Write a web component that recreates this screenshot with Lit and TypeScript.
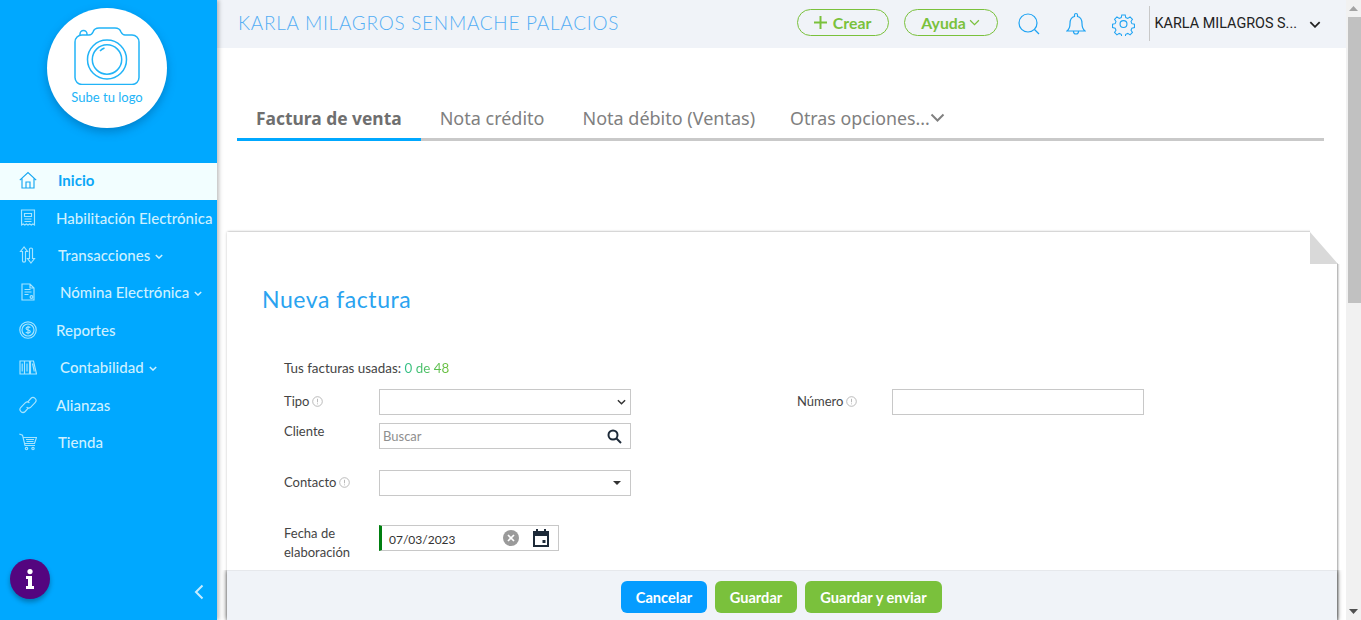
import { LitElement, html, css, svg } from "lit";
import { customElement } from "lit/decorators.js";

const nav = [
  { label: "Inicio", icon: "home", cls: "t58 active" },
  { label: "Habilitación Electrónica", icon: "receipt", cls: "t56" },
  { label: "Transacciones", icon: "swap", cls: "t58", caret: true },
  { label: "Nómina Electrónica", icon: "doc", cls: "t60", caret: true },
  { label: "Reportes", icon: "coin", cls: "t56" },
  { label: "Contabilidad", icon: "books", cls: "t60", caret: true },
  { label: "Alianzas", icon: "link", cls: "t56" },
  { label: "Tienda", icon: "cart", cls: "t58" },
];

const icons: Record<string, unknown> = {
  home: svg`<path d="M.8 9.200 9 1.500l8.200 7.700M3 7.500V17h12V7.500M7 17v-6h4v6"/>`,
  receipt: svg`<path d="M2.500 1h13v15l-1.600-1-1.600 1-1.600-1-1.700 1-1.600-1-1.600 1-1.600-1-1.600 1zM5.500 4.500h7v3h-7zM5.500 10h7M5.500 12.500h7"/>`,
  swap: svg`<path d="M5 1 1.500 5.500H3.500V15c0 1.400 3 1.400 3 0V5.500h2zM12 17l3.500-4.500h-2V3c0-1.400-3-1.400-3 0v9.500h-2z"/>`,
  doc: svg`<path d="M3 1h8l4 4v12H3zM11 1v4h4M5.500 6.500h6M5.500 9h7M5.500 11.500h4"/><circle cx="12.500" cy="14" r="1.400"/>`,
  coin: svg`<circle cx="9" cy="9" r="8.200"/><circle cx="9" cy="9" r="6"/><path d="M11.200 6.700c-.6-1-4-1.200-4.100.7 0 2.100 4.200 1 4.200 3.200 0 1.800-3.700 1.700-4.500.5M9 4.800v8.400"/>`,
  books: svg`<path d="M1 3h4.500v13H1zM5.500 3h5v13h-5zM11.500 3h3l3 13h-6zM3.200 5.500v8M8 5.500v8M13.500 5.500l1.800 8"/>`,
  link: svg`<path d="M8.600 6.200 11.800 2.500a3 3 0 0 1 4.300 4.200L11.800 11.200a3 3 0 0 1-4.200 0"/><path d="M9.400 11.800 6.200 15.500A3 3 0 0 1 1.900 11.300L6.200 6.800a3 3 0 0 1 4.200 0"/>`,
  cart: svg`<path d="M.300 1 3.500 2.200 6 12.500h10M4 4.500h13.500l-2 6H5.500M7 6.500h8M7.500 8.500h7"/><circle cx="7.500" cy="15.500" r="1.200"/><circle cx="14" cy="15.500" r="1.200"/>`,
};

const chevron = (w: number, sw = 1.6) =>
  html`<svg class="chev" width=${w} height=${Math.round(w * 0.62)} viewBox="0 0 10 6" fill="none" stroke="currentColor" stroke-width=${sw}><path d="M1 1l4 4 4-4"/></svg>`;

const info = html`<svg class="inf" width="11" height="11" viewBox="0 0 11 11" fill="none" stroke="#a9a9a9" stroke-width=".8"><circle cx="5.500" cy="5.500" r="4.800"/><path d="M5.500 2.800v3.500M5.500 7.400v.9"/></svg>`;

@customElement("app-root")
export class AppRoot extends LitElement {
  static styles = css`
    :host { display: block; height: 620px; overflow: hidden; font-family: "Lato", "Noto Sans", sans-serif; background: #fff; }
    .page { display: flex; height: 620px; position: relative; overflow: hidden; }

    .side { width: 217px; flex: none; background: #00a8ff; display: flex; flex-direction: column; position: relative; z-index: 3; box-shadow: 2px 0 4px rgba(0,0,0,.25); }
    .logo-wrap { height: 163px; flex: none; display: flex; justify-content: center; padding: 8px 3px 0 0; box-sizing: border-box; }
    .logo { width: 120px; height: 120px; border-radius: 50%; background: #fff; box-shadow: 0 4px 10px rgba(0,60,110,.35); display: flex; flex-direction: column; align-items: center; padding-top: 19px; box-sizing: border-box; color: #22b4f7; font-size: 13px; }
    .logo span { margin-top: 4px; }
    .nav { display: flex; flex-direction: column; }
    .item { height: 37.4px; display: flex; align-items: center; padding-left: 19px; color: #cdf0ff; font-size: 15px; letter-spacing: .03px; font-weight: 500; white-space: nowrap; }
    .item svg.ic { width: 18px; height: 18px; margin-bottom: 3px; flex: none; fill: none; stroke: #a6e4ff; stroke-width: 1.150; }
    .item .lbl { padding-bottom: 3px; }
    .item.active { background: #f2feff; color: #0ba7f7; font-weight: 700; }
    .item.active svg.ic { stroke: #16a7f2; }
    .t56 .lbl { margin-left: 19px; }
    .t58 .lbl { margin-left: 21px; }
    .t60 .lbl { margin-left: 23px; }
    .item .chev { margin-left: 5px; }
    .side-foot { margin-top: auto; display: flex; justify-content: space-between; align-items: flex-end; padding: 0 13px 20px 10px; }
    .fab { width: 40px; height: 40px; margin-bottom: 1px; border-radius: 50%; background: #54057f; display: flex; align-items: center; justify-content: center; box-shadow: 0 3px 5px rgba(0,0,0,.3); }

    .main { flex: 1; min-width: 0; display: flex; flex-direction: column; }
    .top { height: 48px; flex: none; background: #f0f3f8; display: flex; align-items: center; justify-content: space-between; padding: 0 25px 0 21px; }
    .top h1 { margin: 0 0 4px; font-size: 19px; font-weight: 300; color: #54aef4; letter-spacing: .72px; white-space: nowrap; }
    .tools { display: flex; align-items: center; }
    .pill { height: 27px; box-sizing: border-box; border: 1px solid #7ac13c; border-radius: 14px; color: #7ac13c; display: flex; align-items: center; justify-content: center; font-size: 15.800px; font-weight: 700; margin-bottom: 3px; }
    .crear { width: 92px; margin-right: 15px; gap: 6px; }
    .ayuda { width: 94px; gap: 3px; margin-right: 20px; }
    .tool { fill: none; stroke: #1ea3f3; stroke-width: 1.200; flex: none; }
    .bell { margin-left: 26px; }
    .gear { margin-left: 26px; }
    .user { margin-left: 14px; height: 35px; border-left: 1px solid #c8c8c8; padding-left: 5px; display: flex; align-items: center; font: 14.400px "Roboto", sans-serif; color: #222; white-space: nowrap; margin-bottom: 2px; }
    .user .chev { margin-left: 12px; color: #222; margin-top: 3px; }

    .tabs { margin: 52px 22px 0 20px; display: flex; height: 38px; border-bottom: 3px solid #c9c9c9; font: 18px "Noto Sans", sans-serif; color: #808080; flex: none; }
    .tab { padding: 0 19px 3px; display: flex; align-items: center; height: 35px; margin-bottom: -3px; white-space: nowrap; }
    .tab.on { font-weight: 700; font-size: 17.400px; color: #6f6f6f; border-bottom: 3px solid #00a8ff; }
    .tab.more { padding: 0 0 3px 16px; font-size: 17.800px; }
    .tab.more .chev { margin-left: 0; }

    .card { margin: 91px 9px 0 10px; width: 1110px; box-sizing: border-box; flex: none; background: #fff; box-shadow: 0 0 3px rgba(0,0,0,.16), 1px 0 2px rgba(0,0,0,.32); padding: 53px 0 0 35px; position: relative; height: 420px; }
    .fold { position: absolute; top: -4px; right: -5px; display: block; }
    .card h2 { margin: 0; font-size: 23px; font-weight: 400; color: #2aa3f0; letter-spacing: .55px; line-height: 28px; }
    .form { margin: 46px 0 0 22px; font-size: 13px; color: #444; }
    .used { line-height: 18px; font-size: 13.400px; }
    .used b { font-weight: 400; background: linear-gradient(90deg, #2fbf8a, #6cbf3a); -webkit-background-clip: text; background-clip: text; color: transparent; }
    .grid { display: grid; grid-template-columns: 95px 252px 166px 95px 252px; grid-auto-rows: min-content; margin-top: 12px; align-items: start; }
    .lab { display: flex; align-items: center; gap: 3px; line-height: 19px; }
    .ctl { border: 1px solid #c8c8c8; height: 26px; box-sizing: border-box; display: flex; align-items: center; justify-content: space-between; padding: 0 4px 0 3px; color: #333; background: #fff; }
    .ph { color: #8f8f8f; }
    .r1 { grid-row: 1; } .r2 { grid-row: 2; margin-top: 8px; } .r3 { grid-row: 3; margin-top: 21px; } .r4 { grid-row: 4; margin-top: 29px; }
    .c1 { grid-column: 1; } .c2 { grid-column: 2; } .c4 { grid-column: 4; } .c5 { grid-column: 5; }
    .lab.pad4 { padding-top: 3px; }
    .lab.r2 { margin-top: 7px; }
    .lab.r4 { margin-top: 28px; }
    .date { width: 180px; padding: 0 8px 0 0; border-left: 3px solid #007f10; justify-content: flex-start; font-size: 12px; }
    .date span { margin-left: 7px; margin-top: 2px; }
    .clear { margin-left: 47px; }
    .cal { margin-left: 14px; }
    .tri { width: 0; height: 0; border: 4px solid transparent; border-top: 4px solid #333; border-bottom: 0; margin-right: 5px; }
    .mag { margin-right: 4px; }

    .foot { position: absolute; left: 227px; width: 1110px; bottom: 0; height: 50px; z-index: 2; background: #f0f3f8; border-top: 1px solid #e6e8ec; box-sizing: border-box; display: flex; justify-content: center; gap: 8px; padding: 10px 1px 0 0; box-shadow: 0 0 5px rgba(0,0,0,.7); clip-path: inset(0 -8px 0 -8px); }
    .btn { height: 32px; border-radius: 6px; color: #fff; font-size: 14.600px; font-weight: 700; display: flex; align-items: center; justify-content: center; }
    .blue { background: #059cff; width: 86px; }
    .green { background: #7ac13c; }
    .g1 { width: 82px; } .g2 { width: 137px; }

    .sb { width: 15px; flex: none; background: #f1f1f1; display: flex; flex-direction: column; align-items: flex-end; }
    .arrow { height: 17px; width: 15px; display: flex; align-items: center; justify-content: center; flex: none; }
    .thumb { width: 13px; height: 286px; background: #c1c1c1; flex: none; }
    .sb .down { margin-top: auto; }
  `;

  render() {
    return html`<div class="page">
      <aside class="side">
        <div class="logo-wrap"><div class="logo">
          <svg width="68" height="58" viewBox="0 0 68 58" fill="none" stroke="#22b4f7" stroke-width="1.500">
            <path d="M9 57.500h50a7 7 0 0 0 7-7V15a7 7 0 0 0-7-7H52c-2 0-3-1-4-3-1-3-3-4-6-4H26c-3 0-5 1-6 4-.8 2-2 3-4 3H9a7 7 0 0 0-7 7v35.500a7 7 0 0 0 7 7z"/>
            <path d="M7 8V7a3.500 3.500 0 0 1 7 0v1"/>
            <circle cx="34" cy="32.500" r="19.500"/><circle cx="34" cy="32.500" r="14.700"/>
            <path d="M27 24a11 11 0 0 1 4.500-3"/>
          </svg>
          <span>Sube tu logo</span>
        </div></div>
        <nav class="nav">
          ${nav.map((n) => html`<div class="item ${n.cls}">
            <svg class="ic" viewBox="0 0 18 18">${icons[n.icon]}</svg>
            <span class="lbl">${n.label}</span>
            ${n.caret ? chevron(8, 1.8) : ""}
          </div>`)}
        </nav>
        <div class="side-foot">
          <div class="fab">
            <svg width="8" height="20" viewBox="0 0 8 20" fill="#fff"><circle cx="4" cy="2.600" r="2.600"/><path d="M0 7h6v10h2v3H0v-3h2v-7H0z"/></svg>
          </div>
          <svg width="10" height="16" viewBox="0 0 10 16" fill="none" stroke="#c6ecff" stroke-width="2"><path d="M8.500 1.500 2 8l6.500 6.500"/></svg>
        </div>
      </aside>

      <main class="main">
        <header class="top">
          <h1>KARLA MILAGROS SENMACHE PALACIOS</h1>
          <div class="tools">
            <div class="pill crear">
              <svg width="13" height="13" viewBox="0 0 13 13" stroke="#7ac13c" stroke-width="2"><path d="M6.500 0v13M0 6.500h13"/></svg>
              <span>Crear</span>
            </div>
            <div class="pill ayuda"><span>Ayuda</span>${chevron(11, 1.1)}</div>
            <svg class="tool" width="22" height="22" viewBox="0 0 22 22"><circle cx="10" cy="10" r="9"/><path d="M16.500 16.500l4.500 4.500"/></svg>
            <svg class="tool bell" width="20" height="24" viewBox="0 0 20 24"><path d="M1 19c2.500-2 3-3.500 3-7.500 0-4 2-6.500 4.500-7V3a1.500 1.500 0 0 1 3 0v1.500c2.500.5 4.500 3 4.500 7 0 4 .5 5.500 3 7.500zM7.500 19.500a2.500 2.500 0 0 0 5 0"/></svg>
            <svg class="tool gear" width="23" height="24" viewBox="0 0 24 24"><path d="M10 1.500h4l.6 3 2.400 1 2.600-1.700 2.800 2.800-1.700 2.600 1 2.400 3 .6v4l-3 .6-1 2.400 1.700 2.600-2.800 2.800-2.600-1.700-2.400 1-.6 3h-4l-.6-3-2.400-1-2.600 1.700-2.800-2.800 1.700-2.600-1-2.400-3-.6v-4l3-.6 1-2.400-1.700-2.600 2.800-2.800 2.600 1.700 2.400-1z" transform="translate(1.200 1.200) scale(.9)"/><circle cx="12" cy="12" r="3.600"/></svg>
            <div class="user"><span>KARLA MILAGROS S...</span>${chevron(12, 1.5)}</div>
          </div>
        </header>

        <div class="tabs">
          <div class="tab on">Factura de venta</div>
          <div class="tab">Nota crédito</div>
          <div class="tab">Nota débito (Ventas)</div>
          <div class="tab more">Otras opciones...${chevron(15, 1.3)}</div>
        </div>

        <section class="card">
          <svg class="fold" width="33" height="37" viewBox="0 0 33 37"><polygon points="1,0 33,0 33,36 29,36 1,4" fill="#fff"/><polygon points="1,4 29,36 1,36" fill="#d9d9d9"/></svg>
          <h2>Nueva factura</h2>
          <div class="form">
            <div class="used">Tus facturas usadas: <b>0 de 48</b></div>
            <div class="grid">
              <div class="lab r1 c1 pad4">Tipo ${info}</div>
              <div class="ctl r1 c2"><span></span>${chevron(9, 1.6)}</div>
              <div class="lab r1 c4 pad4">Número ${info}</div>
              <div class="ctl r1 c5"></div>
              <div class="lab r2 c1">Cliente</div>
              <div class="ctl r2 c2"><span class="ph">Buscar</span>
                <svg class="mag" width="15" height="15" viewBox="0 0 15 15" fill="none" stroke="#1d2a38" stroke-width="2"><circle cx="6" cy="6" r="4.500"/><path d="M9.500 9.500l4.500 4.500"/></svg></div>
              <div class="lab r3 c1 pad4">Contacto ${info}</div>
              <div class="ctl r3 c2"><span></span><div class="tri"></div></div>
              <div class="lab r4 c1">Fecha de<br />elaboración</div>
              <div class="ctl date r4 c2"><span>07/03/2023</span>
                <svg class="clear" width="16" height="16" viewBox="0 0 16 16"><circle cx="8" cy="8" r="8" fill="#9a9a9a"/><path d="M5 5l6 6M11 5l-6 6" stroke="#fff" stroke-width="1.700"/></svg>
                <svg class="cal" width="16" height="18" viewBox="0 0 16 18" fill="none" stroke="#1d2a38" stroke-width="2"><path d="M1 4h14v13H1zM1 5h14" /><path d="M4 0v3M12 0v3" /><rect x="1" y="3" width="14" height="3" fill="#1d2a38"/><rect x="9.500" y="11" width="3" height="3" fill="#1d2a38" stroke="none"/></svg>
              </div>
            </div>
          </div>
        </section>
      </main>

      <div class="foot">
        <div class="btn blue">Cancelar</div>
        <div class="btn green g1">Guardar</div>
        <div class="btn green g2">Guardar y enviar</div>
      </div>

      <div class="sb">
        <div class="arrow"><svg width="9" height="5" viewBox="0 0 9 5" fill="#a3a3a3"><path d="M4.500 0 9 5H0z"/></svg></div>
        <div class="thumb"></div>
        <div class="arrow down"><svg width="9" height="5" viewBox="0 0 9 5" fill="#505050"><path d="M0 0h9L4.500 5z"/></svg></div>
      </div>
    </div>`;
  }
}
